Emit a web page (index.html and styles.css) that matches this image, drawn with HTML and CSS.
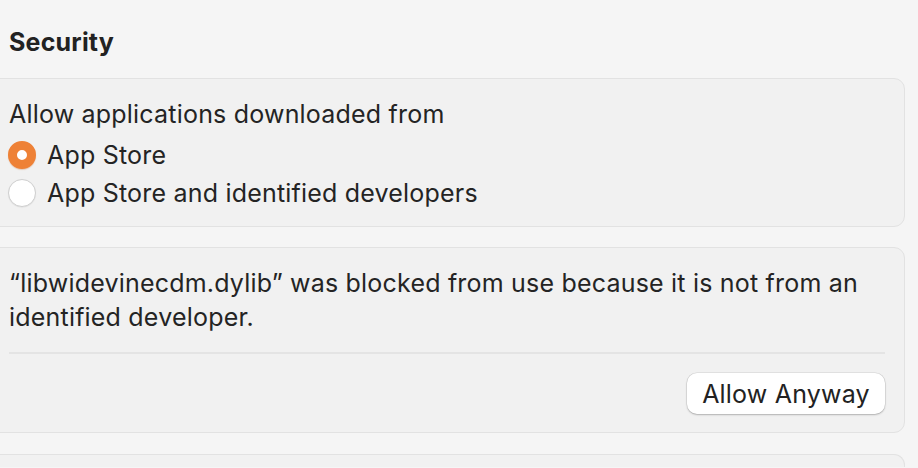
FILE: index.html
```html
<!DOCTYPE html>
<html lang="en">
<head>
<meta charset="utf-8">
<title>Security</title>
<link rel="stylesheet" href="styles.css">
</head>
<body>
<div class="page">
  <h2 class="section-title">Security</h2>
  <div class="card card-apps">
    <div class="label">Allow applications downloaded from</div>
    <label class="radio-row"><span class="radio checked"></span><span class="radio-text">App Store</span></label>
    <label class="radio-row"><span class="radio"></span><span class="radio-text">App Store and identified developers</span></label>
  </div>
  <div class="card card-blocked">
    <p class="message">“libwidevinecdm.dylib” was blocked from use because it is not from an identified developer.</p>
    <div class="divider"></div>
    <div class="actions"><button class="btn">Allow Anyway</button></div>
  </div>
  <div class="card card-next"></div>
</div>
</body>
</html>
```
FILE: styles.css
```css
html, body {
  margin: 0;
  padding: 0;
  background: #f5f5f5;
  overflow: hidden;
}
body {
  width: 918px;
  height: 468px;
  font-family: Inter, "Noto Sans", "Liberation Sans", sans-serif;
  color: #242424;
  font-size: 25px;
  letter-spacing: 0.2px;
}
.page {
  display: flex;
  flex-direction: column;
  height: 468px;
  overflow: hidden;
}
.section-title {
  margin: 0 0 18px 0;
  padding: 25px 0 0 9px;
  font-size: 25px;
  line-height: 35px;
  height: 35px;
  font-weight: 700;
  color: #222;
}
.card {
  margin-left: -12px;
  width: 917px;
  box-sizing: border-box;
  background: #f1f1f1;
  border: 1px solid #e2e2e2;
  border-radius: 11px;
  padding: 18px 19px 0 20px;
  flex: none;
}
.card + .card {
  margin-top: 20px;
}
.label {
  line-height: 34px;
  height: 34px;
}
.radio-row {
  display: flex;
  align-items: center;
  gap: 11px;
  height: 38px;
  margin-left: -1px;
}
.radio-row:first-of-type { margin-top: 5px; }
.radio {
  width: 28px;
  height: 28px;
  box-sizing: border-box;
  border-radius: 50%;
  flex: none;
  background: #fff;
  border: 1px solid #cfcfcf;
  box-shadow: 0 0.5px 1px rgba(0,0,0,0.08);
}
.radio.checked {
  border: 9px solid #ee8136;
  background: #fff;
  box-shadow: 0 1px 1px rgba(200,90,20,0.25);
}
.radio-text {
  line-height: 34px;
}
.card-apps {
  height: 149px;
}
.card-blocked {
  height: 186px;
  padding-top: 18px;
}
.message {
  margin: 0;
  line-height: 34px;
}
.divider {
  height: 2px;
  background: #e4e4e4;
  margin-top: 18px;
}
.actions {
  display: flex;
  justify-content: flex-end;
  margin-top: 19px;
}
.btn {
  font-family: inherit;
  font-size: 25px;
  letter-spacing: 0.2px;
  color: #222;
  background: #fff;
  border: none;
  border-radius: 10px;
  height: 41px;
  width: 198px;
  padding: 0;
  box-shadow: 0 0 0 0.5px rgba(0,0,0,0.12), 0 1px 2px rgba(0,0,0,0.22);
}
.card.card-next {
  margin-top: 21px;
  height: 13px;
  padding: 0;
  border-bottom: none;
  border-bottom-left-radius: 0;
  border-bottom-right-radius: 0;
}
```
